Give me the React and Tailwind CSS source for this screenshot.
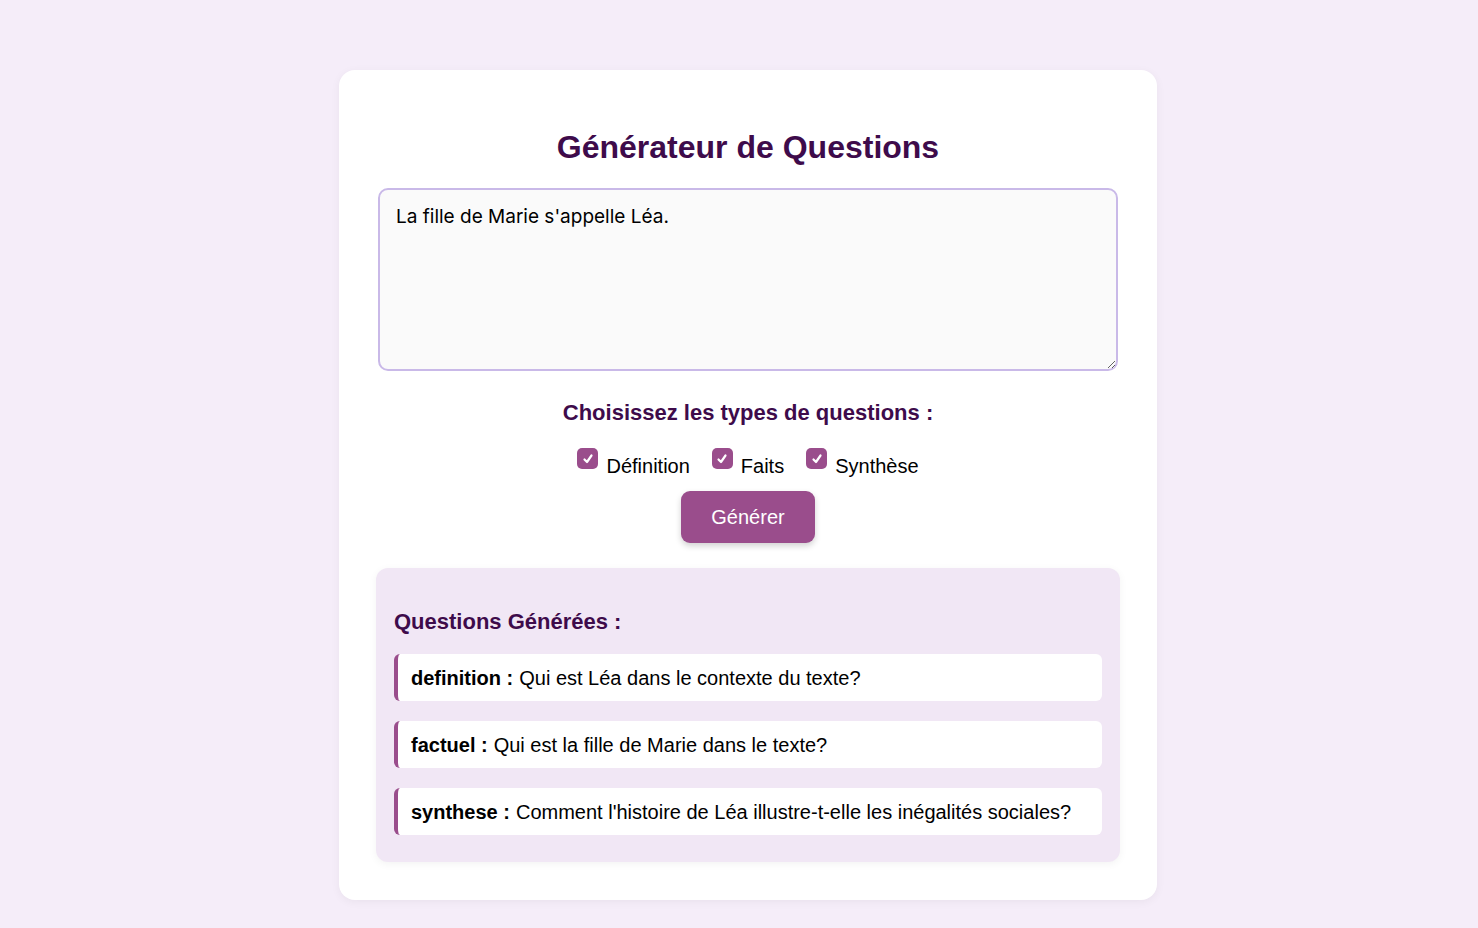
import { useState } from 'react'

const TYPES = [
    { key: 'definition', label: 'Définition' },
    { key: 'factuel', label: 'Faits' },
    { key: 'synthese', label: 'Synthèse' },
]

const QUESTIONS = [
    { type: 'definition', text: 'Qui est Léa dans le contexte du texte?' },
    { type: 'factuel', text: 'Qui est la fille de Marie dans le texte?' },
    { type: 'synthese', text: "Comment l'histoire de Léa illustre-t-elle les inégalités sociales?" },
]

function CheckBox({ checked, onChange, label }) {
    return (
        <label className="flex items-start gap-[8px] cursor-pointer" onClick={onChange}>
            <span className="w-[21px] h-[21px] rounded-[5px] bg-[#9a4d8c] flex items-center justify-center">
                {checked && (
                    <svg width="12" height="12" viewBox="0 0 12 12">
                        <path d="M2.5 6.5 L5 9 L9.5 2.5" fill="none" stroke="white" strokeWidth="2.2" strokeLinecap="round" strokeLinejoin="round" />
                    </svg>
                )}
            </span>
            <span className="mt-[6px] text-[20px] leading-[24px] text-black">{label}</span>
        </label>
    )
}

export default function App() {
    const [text, setText] = useState("La fille de Marie s'appelle Léa.")
    const [checked, setChecked] = useState({ definition: true, factuel: true, synthese: true })

    return (
        <div className="min-h-screen bg-[#f5edf9] pt-[70px] pb-[28px] font-['Liberation_Sans',Arial,sans-serif]">
            <div className="ml-[339px] w-[818px] bg-white rounded-[16px] shadow-[0_2px_10px_rgba(0,0,0,0.05)] px-[39px] pt-[57px] pb-[38px]">

                {/* Titre */}
                <h1 className="text-center text-[32px] leading-[40px] font-bold text-[#3e0b4b] mb-[21px]">
                    Générateur de Questions
                </h1>

                <textarea
                    value={text}
                    onChange={(e) => setText(e.target.value)}
                    className="block w-full h-[183px] rounded-[10px] border-2 border-[#c9b9e8] bg-[#fafafa] px-[16px] py-[14px] text-[19px] leading-[26px] text-black font-['Inter',sans-serif] outline-none"
                />

                <h3 className="mt-[27px] text-center text-[22px] leading-[30px] font-bold text-[#3e0b4b]">
                    Choisissez les types de questions :
                </h3>

                <div className="mt-[20px] flex justify-center gap-[22px]">
                    {TYPES.map((t) => (
                        <CheckBox
                            key={t.key}
                            label={t.label}
                            checked={checked[t.key]}
                            onChange={() => setChecked((c) => ({ ...c, [t.key]: !c[t.key] }))}
                        />
                    ))}
                </div>

                <div className="mt-[13px] flex justify-center">
                    <button className="w-[134px] h-[52px] rounded-[9px] bg-[#9a4d8c] text-white text-[20px] shadow-[0_3px_6px_rgba(0,0,0,0.18)]">
                        Générer
                    </button>
                </div>

                {/* Résultats */}
                <div className="mt-[25px] mx-[-2px] rounded-[12px] bg-[#f1e7f5] shadow-[0_2px_8px_rgba(0,0,0,0.05)] px-[18px] pt-[39px] pb-[27px]">
                    <h3 className="text-[22px] leading-[30px] font-bold text-[#3e0b4b] mb-[17px]">
                        Questions Générées :
                    </h3>
                    <div className="flex flex-col gap-[20px]">
                        {QUESTIONS.map((q) => (
                            <div
                                key={q.type}
                                className="h-[47px] flex items-center bg-white rounded-[6px] border-l-[4px] border-[#9a4d8c] pl-[13px] text-[20px] text-black"
                            >
                                <strong className="font-bold">{q.type} :</strong>
                                <span className="ml-[6px]">{q.text}</span>
                            </div>
                        ))}
                    </div>
                </div>

            </div>
        </div>
    )
}
